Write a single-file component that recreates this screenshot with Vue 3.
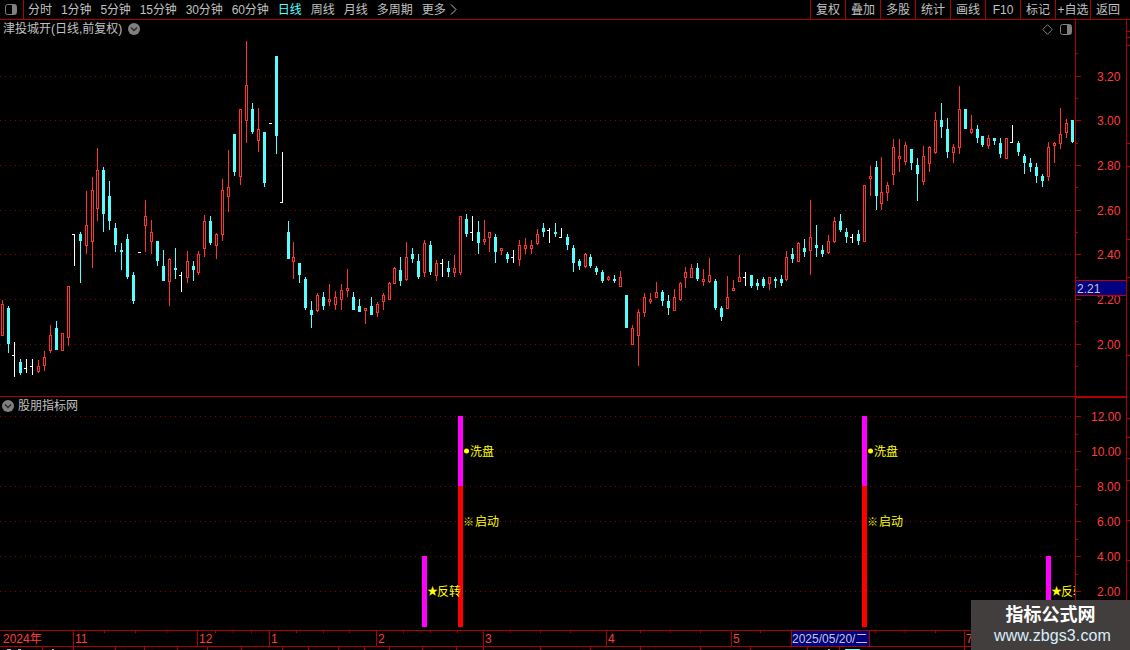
<script setup>
const raw = `r 2 300 304 336 336
c 8 306 308 344 353
w 14 342 377 355
c 20 359 362 373 375
w 26 359 373 368
w 32 359 375 366
r 38 360 366 372 373
r 44 351 357 366 371
r 50 325 335 351 353
c 56 321 328 350 350
r 62 333 333 351 351
r 68 286 286 338 346
w 74 234 266 234
c 80 232 234 241 283
r 86 191 225 246 254
r 92 177 190 242 268
r 97 148 170 209 221
c 103 167 170 214 232
c 109 181 196 221 230
c 115 223 228 245 252
c 121 243 250 252 270
c 127 234 239 277 279
c 133 272 275 301 304
d 139 252
r 145 200 216 226 252
r 151 220 232 242 254
c 157 241 241 261 266
c 163 250 266 281 281
r 169 258 259 282 306
c 175 248 268 270 279
w 181 272 292 275
r 187 251 261 278 283
c 193 261 266 270 281
r 198 251 254 273 275
r 204 215 221 249 257
c 210 216 221 243 245
r 216 233 234 246 259
r 222 179 190 235 241
r 228 150 187 197 212
c 234 134 134 172 176
r 240 109 109 177 185
r 246 41 85 121 143
c 252 103 109 132 134
r 258 108 129 141 152
c 264 132 132 183 187
d 270 123
c 276 56 56 136 154
w 282 152 202 202
c 288 221 232 259 259
r 293 242 257 262 279
c 299 263 263 275 283
c 305 277 279 308 310
c 311 301 310 315 328
r 317 293 295 311 312
c 323 292 297 306 310
r 329 284 299 302 306
r 335 291 297 305 310
r 341 284 290 300 310
r 347 269 288 291 297
c 353 292 297 310 310
c 359 299 306 312 312
r 365 308 308 311 324
c 371 297 306 315 315
r 377 302 304 313 317
r 383 293 295 302 310
r 389 282 283 300 300
r 394 267 268 284 284
c 400 257 270 281 286
r 406 242 257 280 281
c 412 248 254 259 263
c 418 254 261 277 279
r 424 240 243 273 277
c 430 241 245 272 275
r 436 260 263 276 281
w 442 259 277 263
c 448 261 268 272 277
r 454 255 268 273 277
r 460 216 216 273 275
c 466 214 219 234 237
w 472 216 241 232
c 478 221 232 243 254
r 484 220 239 242 245
r 489 232 232 238 252
c 495 234 237 252 263
r 501 248 248 251 255
c 507 252 254 259 263
w 513 250 263 257
r 519 240 245 260 266
r 525 238 245 249 254
r 531 240 245 249 254
r 537 229 234 244 245
c 543 223 228 232 237
w 549 228 243 230
c 555 223 232 234 237
w 561 228 238 237
c 567 234 237 245 250
c 573 245 248 263 272
c 579 259 261 266 270
r 585 253 254 267 268
c 590 254 257 266 268
c 596 266 268 272 275
c 602 270 272 281 283
r 608 276 277 280 281
c 614 275 279 281 283
r 620 271 277 287 287
c 626 295 295 328 328
r 632 325 328 345 345
r 638 309 312 336 366
r 644 293 297 313 317
r 650 293 299 302 304
r 656 282 292 298 298
c 662 290 292 301 306
c 668 295 301 308 315
r 674 289 297 311 311
r 680 282 283 300 301
r 685 267 272 278 288
r 691 264 268 278 278
c 697 263 268 279 281
r 703 269 279 282 286
r 709 258 275 282 283
c 715 279 281 308 310
c 721 306 308 317 321
r 727 276 297 309 309
r 733 280 288 291 291
r 739 255 277 282 282
w 745 272 286 277
c 751 275 275 286 288
c 757 279 283 286 290
c 763 277 279 286 288
r 769 277 277 284 290
c 775 277 279 281 288
c 781 275 279 283 286
r 786 251 257 280 281
c 792 248 254 259 263
r 798 242 243 262 262
c 804 239 248 252 257
r 810 200 237 251 275
c 816 225 245 248 257
c 822 245 250 254 257
r 828 235 241 253 254
r 834 217 221 242 243
c 840 214 221 230 232
c 846 228 232 237 243
w 852 234 243 237
c 858 230 234 241 245
r 864 185 185 242 242
r 870 166 176 179 196
c 876 161 167 196 210
r 881 157 192 204 210
r 887 182 185 193 201
r 893 139 147 175 185
r 899 139 156 159 172
r 905 142 145 162 165
c 911 149 149 163 170
c 917 158 165 174 201
r 923 146 156 182 185
r 929 146 147 164 172
r 935 112 120 153 154
c 941 103 120 127 138
c 947 118 129 152 158
r 953 144 147 153 163
r 959 86 109 148 154
c 965 109 109 129 129
r 971 115 129 133 134
c 977 125 129 138 143
c 982 136 136 145 147
r 988 135 138 146 149
c 994 138 138 141 145
c 1000 138 143 154 158
r 1006 138 138 159 159
w 1012 125 142 142
c 1018 141 143 152 156
c 1024 154 156 163 174
c 1030 158 163 167 172
c 1036 163 167 176 183
c 1042 174 176 181 187
r 1048 142 147 177 181
r 1054 142 143 146 163
r 1060 108 134 144 149
r 1066 119 123 133 138
c 1072 120 120 142 143`

const rows = raw.split('\n').map((line) => {
  const p = line.trim().split(' ')
  return { t: p[0], n: p.slice(1).map(Number) }
})
const dashes = rows.filter((r) => r.t === 'd').map((r) => `M${r.n[0] - 1} ${r.n[1] + 0.5}h3`)
const whites = rows
  .filter((r) => r.t === 'w')
  .map(({ n: [x, hi, lo, tk] }) => `M${x + 0.5} ${hi}V${lo}M${x - 2} ${tk + 0.5}h3`)
const reds = rows.filter((r) => r.t === 'r').map(({ n: [x, hi, top, bot, lo] }) => ({
  x: x - 0.5,
  y: top + 0.5,
  h: Math.max(bot - top - 1, 1),
  wick: `M${x + 0.5} ${hi}V${top}M${x + 0.5} ${bot}V${lo}`,
  key: x
}))
const cyans = rows.filter((r) => r.t === 'c').map(({ n: [x, hi, top, bot, lo] }) => ({
  x: x - 1,
  y: top,
  h: Math.max(bot - top, 2),
  wick: `M${x + 0.5} ${hi}V${lo}`,
  key: x
}))

const tools = ['分时', '1分钟', '5分钟', '15分钟', '30分钟', '60分钟', '日线', '周线', '月线', '多周期']
const actions = ['复权', '叠加', '多股', '统计', '画线', 'F10', '标记', '+自选', '返回']

const priceAxis = [
  { y: 76, label: '3.20' }, { y: 120, label: '3.00' }, { y: 165, label: '2.80' },
  { y: 210, label: '2.60' }, { y: 254, label: '2.40' }, { y: 299, label: '2.20' }, { y: 344, label: '2.00' }
]
const indAxis = [
  { y: 416, label: '12.00' }, { y: 451, label: '10.00' }, { y: 486, label: '8.00' },
  { y: 521, label: '6.00' }, { y: 556, label: '4.00' }, { y: 591, label: '2.00' }
]
const shortPriceTicks = [53, 98, 143, 187, 232, 277, 321, 366]
const shortIndTicks = [434, 469, 504, 539, 574, 609]
const edgeTicks = [31, 37, 45, 143, 166, 239, 277, 355, 418, 437, 458, 480, 520, 560, 600, 625]

const months = [
  { x: 73, label: '11' }, { x: 197, label: '12' }, { x: 269, label: '1' }, { x: 376, label: '2' },
  { x: 483, label: '3' }, { x: 606, label: '4' }, { x: 731, label: '5' }, { x: 964, label: '7' }
]
const minorTicks = [104, 135, 166, 215, 233, 251, 296, 323, 349, 403, 430, 457, 510, 540, 570, 640, 670, 700, 760, 875, 905, 935]
const lowTicks = [42, 73, 115, 144, 177, 207, 241, 282, 308, 338, 364, 389, 422, 456, 483, 540, 590, 640, 700, 750, 807, 839, 964]
const lowText = [
  { x: 7, w: 4, cls: 'low-grey' }, { x: 18, w: 3, cls: 'low-grey' }, { x: 52, w: 2, cls: 'low-grey' },
  { x: 828, w: 2, cls: 'low-grey' }, { x: 845, w: 15, cls: 'low-cyan' }
]

const bars = [
  { x: 422, y: 556, h: 71, cls: 'magenta' },
  { x: 458, y: 486, h: 141, cls: 'red' },
  { x: 458, y: 416, h: 70, cls: 'magenta' },
  { x: 862, y: 486, h: 141, cls: 'red' },
  { x: 862, y: 416, h: 70, cls: 'magenta' },
  { x: 1046, y: 556, h: 71, cls: 'magenta' }
]
const stars = [
  { x: 427, y: 595, tx: 437, text: '反转' },
  { x: 1051, y: 595, tx: 1061, text: '反转' }
]
const washes = [
  { cx: 466.5, y: 456, tx: 470, text: '洗盘' },
  { cx: 870.5, y: 456, tx: 874, text: '洗盘' }
]
const starts = [
  { x: 463, y: 526, tx: 475, text: '启动' },
  { x: 867, y: 526, tx: 879, text: '启动' }
]
</script>

<template>
  <div class="screen">
    <header class="toolbar">
      <div class="toggle">
        <svg width="12" height="11" viewBox="0 0 12 11">
          <rect x="0.5" y="0.5" width="11" height="10" rx="2" class="ico-line" />
          <rect x="7" y="1" width="4" height="9" class="ico-fill" />
        </svg>
      </div>
      <nav class="periods">
        <span v-for="t in tools" :key="t" :class="{ active: t === '日线', num: /\d/.test(t) }">{{ t }}</span>
        <span class="more">更多<svg width="7" height="11" viewBox="0 0 7 11"><path d="M1 0.5L6 5.5L1 10.5" class="chev" /></svg></span>
      </nav>
      <nav class="actions">
        <span v-for="a in actions" :key="a">{{ a }}</span>
      </nav>
    </header>

    <main class="stage">
      <svg class="chart" width="1130" height="650" viewBox="0 0 1130 650" shape-rendering="crispEdges">
        <defs>
          <clipPath id="plot"><rect x="0" y="20" width="1075" height="610" /></clipPath>
        </defs>

        <g class="grid">
          <path v-for="t in priceAxis" :key="t.y" :d="`M0 ${t.y + 0.5}H1075`" />
          <path v-for="t in indAxis" :key="t.y" :d="`M0 ${t.y + 0.5}H1075`" />
        </g>

        <path v-for="c in reds" :key="'w' + c.key" :d="c.wick" class="red-line" />
        <rect v-for="c in reds" :key="'b' + c.key" :x="c.x" :y="c.y" width="2" :height="c.h" class="red-body" />
        <path v-for="c in cyans" :key="'w' + c.key" :d="c.wick" class="cyan-line" />
        <rect v-for="c in cyans" :key="'b' + c.key" :x="c.x" :y="c.y" width="3" :height="c.h" class="cyan-body" />
        <path v-for="d in whites" :key="d" :d="d" class="white-line" />
        <path v-for="d in dashes" :key="d" :d="d" class="white-line" />

        <g>
          <rect v-for="b in bars" :key="b.x + '-' + b.y" :x="b.x" :y="b.y" width="5" :height="b.h" :class="b.cls" />
        </g>
        <g clip-path="url(#plot)">
          <g v-for="m in stars" :key="m.x">
            <text :x="m.x" :y="m.y" class="mark-sign">★</text>
            <text :x="m.tx" :y="m.y + 1" class="mark">{{ m.text }}</text>
          </g>
          <g v-for="m in washes" :key="m.cx">
            <circle :cx="m.cx" :cy="m.y - 5" r="2.5" class="mark-dot" shape-rendering="auto" />
            <text :x="m.tx" :y="m.y" class="mark">{{ m.text }}</text>
          </g>
          <g v-for="m in starts" :key="m.x">
            <text :x="m.x" :y="m.y" class="mark-ref">※</text>
            <text :x="m.tx" :y="m.y" class="mark">{{ m.text }}</text>
          </g>
        </g>

        <g class="frame">
          <path d="M1075.5 20V646M1126.5 20V646M0 396.5H1126M1076 397.5H1126M0 630.5H1126M0 646.5H1126" />
          <path v-for="t in priceAxis" :key="t.y" :d="`M1075 ${t.y + 0.5}h6`" />
          <path v-for="t in indAxis" :key="t.y" :d="`M1075 ${t.y + 0.5}h6`" />
          <path v-for="y in shortPriceTicks" :key="y" :d="`M1075 ${y + 0.5}h3`" />
          <path v-for="y in shortIndTicks" :key="y" :d="`M1075 ${y + 0.5}h3`" />
          <path v-for="y in edgeTicks" :key="y" :d="`M1126 ${y + 0.5}h4`" />
          <path v-for="m in months" :key="m.x" :d="`M${m.x + 0.5} 630V646`" />
          <path v-for="x in minorTicks" :key="x" :d="`M${x + 0.5} 630v3`" />
          <path v-for="x in lowTicks" :key="x" :d="`M${x + 0.5} 646V650`" />
        </g>
        <rect v-for="t in lowText" :key="t.x" :x="t.x" y="649" :width="t.w" height="1" :class="t.cls" />

        <text v-for="t in priceAxis" :key="t.y" x="1097" :y="t.y + 5" class="axis-text">{{ t.label }}</text>
        <text v-for="t in indAxis" :key="t.y" :x="t.label.length > 4 ? 1091 : 1097" :y="t.y + 5" class="axis-text">{{ t.label }}</text>

        <rect x="1076" y="280" width="50" height="16" class="price-box" />
        <path d="M1076 280.5H1126M1076 295.5H1126" class="box-edge" />
        <text x="1077" y="293" class="box-text">2.21</text>

        <text x="3" y="643" class="axis-text">2024年</text>
        <text v-for="m in months" :key="m.x" :x="m.x + 2" y="643" class="axis-text">{{ m.label }}</text>
        <rect x="791.5" y="630.5" width="78" height="16" class="date-box" />
        <text x="792" y="643" class="box-text">2025/05/20/二</text>
      </svg>

      <div class="title main-title">
        <span>津投城开(日线,前复权)</span>
        <svg width="12" height="12" viewBox="0 0 12 12">
          <circle cx="6" cy="6" r="6" class="dot" />
          <path d="M3 4.5L6 7.5L9 4.5" class="dot-chev" />
        </svg>
      </div>

      <div class="title sub-title">
        <svg width="12" height="12" viewBox="0 0 12 12">
          <circle cx="6" cy="6" r="6" class="dot" />
          <path d="M3 4.5L6 7.5L9 4.5" class="dot-chev" />
        </svg>
        <span>股朋指标网</span>
      </div>

      <div class="pane-tools">
        <svg width="11" height="11" viewBox="0 0 11 11"><path d="M5.5 0.7L10.3 5.5L5.5 10.3L0.7 5.5Z" class="ico-line" /></svg>
        <svg width="12" height="11" viewBox="0 0 12 11">
          <rect x="0.5" y="0.5" width="11" height="10" rx="2" class="ico-line" />
          <rect x="7" y="1" width="4" height="9" class="ico-fill" />
        </svg>
      </div>

      <aside class="stamp">
        <strong>指标公式网</strong>
        <span>www.zbgs3.com</span>
      </aside>
    </main>
  </div>
</template>

<style scoped>
.screen {
  width: 1130px;
  height: 650px;
  overflow: hidden;
  background: #000;
  display: flex;
  flex-direction: column;
  font-family: "Liberation Sans", "Noto Sans CJK SC", sans-serif;
  font-size: 12px;
  color: #c0c0c0;
}
.toolbar {
  flex: none;
  height: 19px;
  box-sizing: content-box;
  border-bottom: 1px solid #b00000;
  display: flex;
  align-items: stretch;
  line-height: 20px;
}
.toggle {
  border-right: 1px solid #b00000;
  display: flex;
  align-items: center;
  padding-left: 5px;
  box-sizing: border-box;
  width: 24px;
}
.toggle svg { display: block; }
.periods {
  display: flex;
  gap: 9px;
  padding-left: 4px;
}
.periods .active {
  color: #54ffff;
}
.periods .num {
  letter-spacing: -0.1px;
}
.more {
  display: inline-flex;
  align-items: center;
  gap: 4px;
}
.more svg { display: block; }
.actions {
  margin-left: auto;
  display: grid;
  grid-template-columns: repeat(8, 35px) 40px;
}
.actions span {
  border-left: 1px solid #b00000;
  text-align: center;
  white-space: nowrap;
}
.actions span:last-child {
  padding-right: 5px;
}
.stage {
  position: relative;
  flex: 1;
  min-height: 0;
}
.chart {
  position: absolute;
  left: 0;
  top: -20px;
  display: block;
}
.grid path {
  stroke: #900000;
  stroke-width: 1;
  stroke-dasharray: 1 4;
  fill: none;
}
.frame path {
  stroke: #b00000;
  stroke-width: 1;
  fill: none;
}
.red-line { stroke: #ff3232; stroke-width: 1; fill: none; }
.red-body { stroke: #ff3232; stroke-width: 1; fill: #000; }
.cyan-line { stroke: #54ffff; stroke-width: 1; fill: none; }
.cyan-body { fill: #54ffff; }
.white-line { stroke: #fff; stroke-width: 1; fill: none; }
.magenta { fill: #ff00ff; }
.red { fill: #ff0000; }
.low-grey { fill: #b8b8b8; }
.low-cyan { fill: #54ffff; }
.mark {
  fill: #ffff00;
  font-size: 12px;
  font-family: "Liberation Sans", "Noto Sans CJK SC", sans-serif;
}
.mark-sign {
  fill: #ffff00;
  font-size: 11px;
  font-family: "Noto Sans CJK SC", sans-serif;
}
.mark-ref {
  fill: #e0e000;
  font-size: 11px;
  font-weight: 700;
  font-family: "Noto Sans CJK SC", sans-serif;
}
.mark-dot { fill: #ffff00; }
.axis-text {
  fill: #ff3c3c;
  font-size: 12px;
  font-family: "Liberation Sans", "Noto Sans CJK SC", sans-serif;
}
.box-text {
  fill: #c8c8c8;
  font-size: 12px;
  font-family: "Liberation Sans", "Noto Sans CJK SC", sans-serif;
}
.price-box { fill: #000080; }
.box-edge { stroke: #c00000; fill: none; }
.date-box { fill: #000080; stroke: #b00000; }
.title {
  position: absolute;
  display: flex;
  align-items: center;
  line-height: 14px;
  white-space: nowrap;
}
.main-title {
  left: 3px;
  top: 2px;
  gap: 6px;
}
.sub-title {
  left: 2px;
  top: 379px;
  gap: 4px;
}
.dot { fill: #808080; }
.dot-chev { stroke: #2a2a2a; stroke-width: 1.5; fill: none; }
.ico-line { fill: none; stroke: #808080; stroke-width: 1; }
.ico-fill { fill: #808080; }
.chev { fill: none; stroke: #c0c0c0; stroke-width: 1; }
.pane-tools {
  position: absolute;
  left: 1042px;
  top: 4px;
  display: flex;
  align-items: center;
  gap: 7px;
}
.pane-tools svg { display: block; }
.stamp {
  position: absolute;
  left: 971px;
  top: 580px;
  width: 159px;
  height: 50px;
  background: #423e3e;
  display: flex;
  flex-direction: column;
  align-items: center;
  padding-top: 4px;
  box-sizing: border-box;
}
.stamp strong {
  color: #fff;
  font-size: 18px;
  line-height: 22px;
  font-weight: 700;
}
.stamp span {
  color: #d8eefc;
  font-size: 16px;
  line-height: 20px;
  letter-spacing: 0.1px;
  margin-left: 4px;
}
</style>
